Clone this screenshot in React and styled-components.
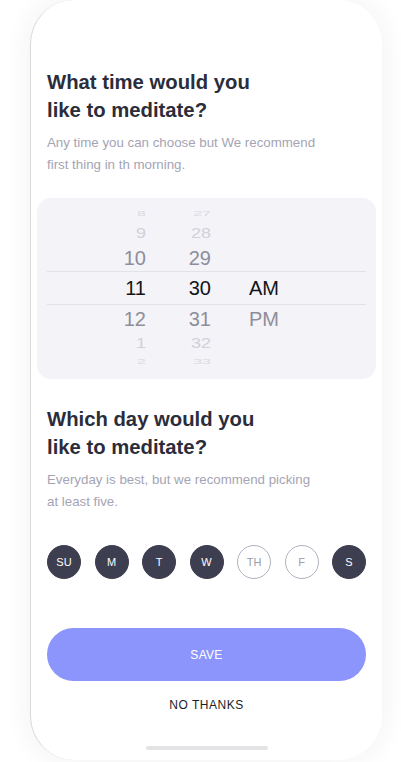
import React from 'react';
import styled, { createGlobalStyle } from 'styled-components';

const GlobalStyle = createGlobalStyle`
  html, body {
    margin: 0;
    padding: 0;
    background: #ffffff;
    overflow: hidden;
  }
  * {
    box-sizing: border-box;
  }
`;

const hours = ['8', '9', '10', '11', '12', '1', '2'];
const minutes = ['27', '28', '29', '30', '31', '32', '33'];
const periods = ['', '', '', 'AM', 'PM', '', ''];
const levels = ['far', 'mid', 'near', 'selected', 'near', 'mid', 'far'];
const heights = [16, 22, 27, 34, 27, 22, 14];

const days = [
  { label: 'SU', on: true },
  { label: 'M', on: true },
  { label: 'T', on: true },
  { label: 'W', on: true },
  { label: 'TH', on: false },
  { label: 'F', on: false },
  { label: 'S', on: true },
];

function App() {
  return (
    <Page>
      <GlobalStyle />
      <Phone>
        <Title>What time would you<br />like to meditate?</Title>
        <Subtitle>Any time you can choose but We recommend<br />first thing in th morning.</Subtitle>

        <Picker>
          {hours.map((h, i) => (
            <WheelRow key={h} $level={levels[i]} style={{ height: heights[i] }}>
              <HourCell $level={levels[i]}>{h}</HourCell>
              <MinuteCell $level={levels[i]}>{minutes[i]}</MinuteCell>
              <PeriodCell $level={levels[i]}>{periods[i]}</PeriodCell>
            </WheelRow>
          ))}
        </Picker>

        <Title $top={26}>Which day would you<br />like to meditate?</Title>
        <Subtitle>Everyday is best, but we recommend picking<br />at least five.</Subtitle>

        <Days>
          {days.map(d => (
            <Day key={d.label} $on={d.on}>{d.label}</Day>
          ))}
        </Days>

        <SaveButton>SAVE</SaveButton>
        <SkipLink>NO THANKS</SkipLink>

        <Spacer />
        <HomeBar />
      </Phone>
    </Page>
  );
}

const Page = styled.div`
  width: 401px;
  height: 762px;
  display: flex;
  justify-content: flex-start;
  padding-left: 30px;
  font-family: "Liberation Sans", Arial, sans-serif;
`;

const Phone = styled.div`
  width: 352px;
  height: 760px;
  background: #ffffff;
  border-radius: 44px;
  border-left: 1px solid #d9d9dc;
  box-shadow: 0 0 28px rgba(40, 40, 80, 0.07);
  display: flex;
  flex-direction: column;
  padding: 68px 16px 0 16px;
`;

const Title = styled.h1`
  margin: ${p => p.$top || 0}px 0 0 0;
  font-size: 20.3px;
  line-height: 28px;
  font-weight: 700;
  color: #2b2d3b;
`;

const Subtitle = styled.p`
  margin: 8px 0 0 0;
  font-size: 13.3px;
  line-height: 22px;
  color: #a4a4b4;
`;

const Picker = styled.div`
  margin: 22px -10px 0 -10px;
  background: #f3f3f8;
  border-radius: 14px;
  padding: 8px 10px 11px 10px;
`;

const WheelRow = styled.div`
  display: grid;
  grid-template-columns: 99px 65px 1fr;
  align-items: center;
  border-top: ${p => (p.$level === 'selected' ? '1px solid #e2e2e9' : 'none')};
  border-bottom: ${p => (p.$level === 'selected' ? '1px solid #e2e2e9' : 'none')};
`;

const levelStyle = {
  far: 'font-size: 16px; color: #dadae1; transform: scaleY(0.45);',
  mid: 'font-size: 18px; color: #d1d1d9; transform: scaleY(0.8);',
  near: 'font-size: 20px; color: #8d8e9b;',
  selected: 'font-size: 20px; color: #121419;',
};

const Cell = styled.div`
  line-height: 1;
  ${p => levelStyle[p.$level]}
`;

const HourCell = styled(Cell)`
  text-align: right;
`;

const MinuteCell = styled(Cell)`
  text-align: right;
`;

const PeriodCell = styled(Cell)`
  padding-left: 38px;
`;

const Days = styled.div`
  margin-top: 32px;
  display: flex;
  justify-content: space-between;
`;

const Day = styled.div`
  width: 34px;
  height: 34px;
  border-radius: 50%;
  display: flex;
  align-items: center;
  justify-content: center;
  font-size: 11px;
  background: ${p => (p.$on ? '#3d3e4f' : '#ffffff')};
  color: ${p => (p.$on ? '#ffffff' : '#9a9bab')};
  border: 1px solid ${p => (p.$on ? '#3d3e4f' : '#b0b1be')};
`;

const SaveButton = styled.button`
  margin-top: 49px;
  height: 53px;
  width: 100%;
  border: none;
  border-radius: 27px;
  background: #8b95fb;
  color: #ffffff;
  font-family: "Liberation Sans", Arial, sans-serif;
  font-size: 12px;
  letter-spacing: 0.3px;
`;

const SkipLink = styled.div`
  margin-top: 16px;
  height: 16px;
  line-height: 16px;
  text-align: center;
  font-size: 12px;
  letter-spacing: 0.5px;
  color: #1c1d26;
`;

const Spacer = styled.div`
  flex: 1;
`;

const HomeBar = styled.div`
  align-self: center;
  width: 122px;
  height: 4px;
  border-radius: 2px;
  background: #e4e4e6;
  margin-bottom: 10px;
`;

export default App;
